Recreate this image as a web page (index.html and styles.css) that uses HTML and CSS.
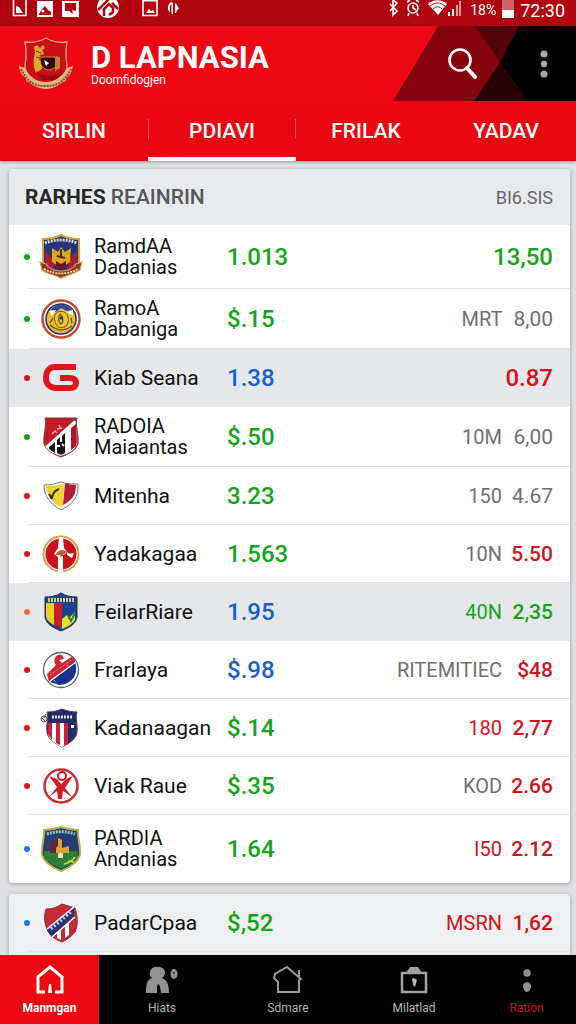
FILE: index.html
```html
<!DOCTYPE html>
<html lang="id">
<head>
    <meta charset="UTF-8">
    <meta name="viewport" content="width=device-width, initial-scale=1.0">
    <title>D LAPNASIA</title>
    <link rel="stylesheet" href="styles.css">
</head>
<body>
    <div class="status-bar">
        <svg class="status-left" width="190" height="20" viewBox="0 0 190 20" aria-hidden="true">
            <g fill="none" stroke="#fff" stroke-width="1.6">
                <path d="M13.500 0v15.500h12.500V0M143 .8h14v14.700h-14z"/>
            </g>
            <path fill="#fff" d="M16 13V6l3 1 4 6zM37 1h16v16H37zM62 1h17v16H62zM146 13l3-4 2 2 2-1 2 3zM169 4c1-2 3-2 4-1v11h-1.500V4.500l-1.500 1V12c-2-1-3-5-1-8zM175 3l2 2 2 4-2 1-1 3h-1z"/>
            <path fill="#b0050e" d="M39 14l3-5 3-3 3 4 3 2v3H39zM65 3h11v8l-4-1 1 4-4-3h-4z"/>
            <circle cx="43" cy="11" r="1.500" fill="#fff"/>
            <circle cx="108" cy="7" r="11" fill="#fff"/>
            <path fill="none" stroke="#b0050e" stroke-width="2.500" d="M98 10l12-12M104 16V9l5-5 4 4v4l-4 3M112 3l6 6"/>
        </svg>
        <div class="status-right">
            <svg width="76" height="20" viewBox="0 0 76 20" aria-hidden="true">
                <path fill="none" stroke="#fff" stroke-width="1.600" d="M2 4l7 7-4 4V0l4 3-7 8"/>
                <g fill="none" stroke="#fff" stroke-width="1.600">
                    <circle cx="25" cy="8" r="5"/>
                    <path d="M25 5v3l3 2M19 2l3-2M31 2l-3-2M21 13l-1 3M29 13l1 3"/>
                </g>
                <path fill="#fff" d="M40 4c5-5 14-5 19 0l-9 11z"/>
                <path fill="none" stroke="#b0050e" d="M42 6c5-4 10-4 15 0M45 9c3-3 6-3 9 0"/>
                <path fill="#fff" d="M60 16v-4h2v4zM64 16V9h2v7z"/>
                <path fill="#e59a9e" d="M68 16V5h2v11zM71 16V1h2v15z"/>
            </svg>
            <span class="battery-text">18%</span>
            <svg width="12" height="18" viewBox="0 0 12 18" aria-hidden="true">
                <path fill="#cf6268" d="M0 0h12v10H0z"/>
                <path fill="#fff" d="M0 10h12v8H0z"/>
            </svg>
            <span class="clock">72:30</span>
        </div>
    </div>

    <header class="app-bar">
        <svg class="app-bar-art" viewBox="0 0 200 74" preserveAspectRatio="none" aria-hidden="true">
            <path fill="#86040d" d="M62 0h138v74H17z"/>
            <path fill="#520208" d="M99 0h44l-19 36z"/>
            <path fill="#000" d="M143 0h57v74h-49l-27-38z"/>
            <path fill="#270103" d="M124 36l27 38H98z"/>
        </svg>
        <svg class="logo" width="56" height="54" viewBox="0 0 56 54" aria-hidden="true">
            <path d="M7 5c6 1 12 1 21-4 9 5 15 5 21 4-2 9-1 17 0 24 0 9-9 15-21 20C16 44 7 38 7 29c1-7 2-15 0-24z" fill="#cb0d14" stroke="#e3a68c" stroke-width="1.300"/>
            <path d="M16 10l3-2 3 3 3-3 2 3-3 2 2 4-4 1-1 5 3 1v8l-6 4c-3-7-3-14-1-20z" fill="#dda52a"/>
            <path d="M18 14l5 2M18 20l4 1" stroke="#7d2a0c" stroke-width="1"/>
            <path d="M22 20h18c0 8-3 12-9 13-6 0-9-5-9-13z" fill="#310406" stroke="#c78c3a" stroke-width="1"/>
            <path d="M26 23l5 3-3 3z" fill="#fff"/>
            <path d="M37 20h5v11l-5 3z" fill="#b7872c"/>
            <path d="M18 34c8 6 17 6 26 0l-6 9H24z" fill="#980a10"/>
            <path d="M1 29l6 2c5 11 14 14 21 14s16-4 21-14l6-2c-2 9-4 10-7 12 0 3-1 4-3 4-5 4-11 7-17 7s-13-3-17-7c-2 0-3-1-3-4-3-2-6-4-7-12z" fill="#ddb584"/>
            <path d="M3 32c7 15 15 17 25 17s18-3 25-17" fill="none" stroke="#85542b" stroke-width="2" stroke-dasharray="2 1"/>
        </svg>
        <div class="brand">
            <h1>D LAPNASIA</h1>
            <p>Doomfidogjen</p>
        </div>
        <button class="icon-button search" type="button" aria-label="Search">
            <svg width="32" height="34" viewBox="0 0 32 34" aria-hidden="true">
                <circle cx="13" cy="13" r="10.500" fill="none" stroke="#fff" stroke-width="2.600"/>
                <path d="M20 21l8 9" stroke="#fff" stroke-width="4" stroke-linecap="round"/>
            </svg>
        </button>
        <button class="icon-button more" type="button" aria-label="More">
            <svg width="10" height="30" viewBox="0 0 10 30" aria-hidden="true" fill="#a9a9a9">
                <circle cx="5" cy="5" r="3.500"/>
                <circle cx="5" cy="15" r="3.200"/>
                <circle cx="5" cy="25" r="3.500"/>
            </svg>
        </button>
    </header>

    <nav class="tabs">
        <a href="#sirlin">SIRLIN</a>
        <a href="#pdiavi" class="active">PDIAVI</a>
        <a href="#frilak">FRILAK</a>
        <a href="#yadav">YADAV</a>
    </nav>

    <main>
        <section class="card">
            <div class="card-header">
                <h2>RARHES <span>REAINRIN</span></h2>
                <span class="card-note">BI6.SIS</span>
            </div>
            <table class="ranking">
                <tr class="first">
                    <td class="state"><i class="dot green"></i></td>
                    <td class="badge">
                        <svg width="44" height="46" viewBox="0 0 44 46" aria-hidden="true">
                            <path d="M4 5c7 0 12-1 18-4 6 3 11 4 18 4v23c-2 7-9 11-18 16C13 39 6 35 4 28z" fill="#27337c" stroke="#d7a43b" stroke-width="2"/>
                            <path d="M6 17l8 8 2 12c-6-3-9-7-10-10zM38 17l-8 8-2 12c6-3 9-7 10-10z" fill="#a92229"/>
                            <path d="M6 9c10-4 22-4 32 0" fill="none" stroke="#dcd6c5" stroke-width="3" stroke-dasharray="2 1"/>
                            <path d="M13 14l6 4 3-5 4 5 6-4-1 14-9 6-9-6z" fill="#d9a91e"/>
                            <path d="M22 15v9M18 22l8 2" stroke="#443012" stroke-width="2"/>
                            <path d="M17 27l5 3 5-3v5l-5 4-5-4z" fill="#791219"/>
                            <path d="M1 28l6 2c4 6 9 7 15 7s12-2 15-7l6-2-2 8c-6 4-12 5-19 8-6-3-14-4-19-8z" fill="#8f3428" stroke="#dba84d" stroke-width="1.200"/>
                            <path d="M5 35c12 6 23 6 34 0" fill="none" stroke="#f0d895" stroke-width="2" stroke-dasharray="2 1"/>
                        </svg>
                    </td>
                    <td class="team two-line">RamdAA<br>Dadanias</td>
                    <td class="score green">1.013</td>
                    <td class="change"><b class="green large">13,50</b></td>
                </tr>
                <tr>
                    <td class="state"><i class="dot green"></i></td>
                    <td class="badge">
                        <svg width="40" height="42" viewBox="0 0 40 42" aria-hidden="true">
                            <circle cx="20" cy="21" r="18.500" fill="#fff" stroke="#c34c35" stroke-width="2.500"/>
                            <circle cx="20" cy="21" r="15" fill="#e6bd31" stroke="#2a3260" stroke-width="1.500"/>
                            <path d="M9 12c7-7 15-7 22 0l-5 1-6-3-5 4z" fill="#294aa3"/>
                            <path d="M8 13l7-1-4 6zM32 12l-6 2 6 4z" fill="#fff"/>
                            <path d="M15 15c7-5 14 2 12 9-1 6-10 8-12 2-2-4-2-8 0-11z" fill="#edc638" stroke="#755719"/>
                            <path d="M19 16c3 2 4 8 1 10-3-2-3-7-1-10zM9 27c7 6 14 7 22 1M12 20l-3 5M30 20l1 5" fill="none" stroke="#6d4b17" stroke-width="1.300"/>
                            <circle cx="20" cy="20" r="1.600" fill="#172b67"/>
                        </svg>
                    </td>
                    <td class="team two-line">RamoA<br>Dabaniga</td>
                    <td class="score green">$.15</td>
                    <td class="change">MRT <b class="plain">8,00</b></td>
                </tr>
                <tr class="marked">
                    <td class="state"><i class="dot red"></i></td>
                    <td class="badge">
                        <svg width="38" height="30" viewBox="0 0 38 30" aria-hidden="true">
                            <path d="M34 4H13C7 4 4 9 4 15s4 10 10 10h14c4 0 6-2 6-5s-2-5-6-5H18" fill="none" stroke="#dc1720" stroke-width="6"/>
                        </svg>
                    </td>
                    <td class="team">Kiab Seana</td>
                    <td class="score blue">1.38</td>
                    <td class="change"><b class="red large">0.87</b></td>
                </tr>
                <tr>
                    <td class="state"><i class="dot green"></i></td>
                    <td class="badge">
                        <svg width="38" height="42" viewBox="0 0 38 42" aria-hidden="true">
                            <path d="M3 2h32c-2 8 2 16 1 26-2 6-9 10-17 13C11 38 4 34 2 28 1 18 5 10 3 2z" fill="#c51925" stroke="#703c40"/>
                            <path d="M34 5L4 31c3 5 9 7 15 9 8-3 14-6 16-12 1-9-2-16-1-23z" fill="#fff"/>
                            <path d="M33 5L4 31" stroke="#fff" stroke-width="2"/>
                            <path d="M7 31l6-5v11l-6-4zM15 24l3-3v5h2v-6l3-3v20l-4 2-4-2z" fill="#161616"/>
                            <path d="M29 12l5-4c0 7 2 17 0 22l-5 4z" fill="#b21620"/>
                            <path d="M15 30h3M20 28l2 2" stroke="#fff" stroke-width="2"/>
                            <path d="M10 18l3-3 2 2M17 9l2 4M15 13l5-1" stroke="#f3abb0" stroke-width="1.500" fill="none"/>
                        </svg>
                    </td>
                    <td class="team two-line">RADOIA<br>Maiaantas</td>
                    <td class="score green">$.50</td>
                    <td class="change">10M <b class="plain">6,00</b></td>
                </tr>
                <tr>
                    <td class="state"><i class="dot red"></i></td>
                    <td class="badge">
                        <svg width="38" height="30" viewBox="0 0 38 30" aria-hidden="true">
                            <path d="M2 4c6 0 11-1 17-3 6 2 11 2 17 2 1 13-5 20-17 26C8 23 2 15 2 4z" fill="#fff" stroke="#777" stroke-width="1"/>
                            <path d="M4 5c6 0 12-1 18-2l-1 22-3 1C10 21 5 14 4 5z" fill="#efd32c"/>
                            <path d="M23 2c4 1 7 2 11 2 0 9-3 15-13 20z" fill="#b31e36"/>
                            <path d="M7 13l3 5M10 18c0-5 2-8 7-10" fill="none" stroke="#342c15" stroke-width="2"/>
                        </svg>
                    </td>
                    <td class="team">Mitenha</td>
                    <td class="score green">3.23</td>
                    <td class="change">150 <b class="plain">4.67</b></td>
                </tr>
                <tr>
                    <td class="state"><i class="dot red"></i></td>
                    <td class="badge">
                        <svg width="38" height="40" viewBox="0 0 38 40" aria-hidden="true">
                            <circle cx="19" cy="20" r="17.500" fill="#fff" stroke="#d7a04a" stroke-width="2"/>
                            <circle cx="19" cy="20" r="15.500" fill="#c8131c"/>
                            <path d="M17 3h4l1 11 3 4-4 4v16h-5V23l-4-3 4-6z" fill="#fff"/>
                            <path d="M13 21c4-6 8-6 12-3l-4 3z" fill="#c85843"/>
                            <path d="M25 18c3 3 5 1 7 1l-2 5-5-3z" fill="#fff"/>
                            <path d="M18 22l7-1" stroke="#922018" stroke-width="1"/>
                        </svg>
                    </td>
                    <td class="team">Yadakagaa</td>
                    <td class="score green">1.563</td>
                    <td class="change">10N <b class="red">5.50</b></td>
                </tr>
                <tr class="marked">
                    <td class="state"><i class="dot orange"></i></td>
                    <td class="badge">
                        <svg width="38" height="40" viewBox="0 0 38 40" aria-hidden="true">
                            <path d="M3 5c6 0 11-1 16-4 5 3 10 4 16 4v20c-1 7-7 10-16 14C10 35 4 32 3 25z" fill="#1c438f" stroke="#26334a"/>
                            <path d="M4 11h8v22c-5-3-8-5-8-10z" fill="#f0ce29"/>
                            <path d="M12 11h8v25l-8-3z" fill="#c71e2a"/>
                            <path d="M20 27l5-4 2 3 6-6v8c-3 4-6 6-13 9z" fill="#e8e42a"/>
                            <path d="M26 24l3 5 4-8" stroke="#258047" stroke-width="2" fill="none"/>
                            <path d="M6 8h26" stroke="#dfc574" stroke-width="4" stroke-dasharray="2 1"/>
                        </svg>
                    </td>
                    <td class="team">FeilarRiare</td>
                    <td class="score blue">1.95</td>
                    <td class="change green">40N <b class="green">2,35</b></td>
                </tr>
                <tr>
                    <td class="state"><i class="dot red"></i></td>
                    <td class="badge">
                        <svg width="38" height="40" viewBox="0 0 38 40" aria-hidden="true">
                            <circle cx="19" cy="20" r="17.500" fill="#fff" stroke="#58617e" stroke-width="1.300"/>
                            <path d="M32 9c6 14-1 25-15 26L8 32z" fill="#1a318d"/>
                            <path d="M5 24l9-9c-4-5 0-12 6-10l2 4-5 1 3 3L31 6l2 5L7 32z" fill="#cf2632"/>
                            <path d="M7 32l27-20" stroke="#fff" stroke-width="1.300"/>
                            <path d="M12 30l3 5M25 15l3 3M8 25l21-15" stroke="#e3a9b4" stroke-dasharray="2 2"/>
                        </svg>
                    </td>
                    <td class="team">Frarlaya</td>
                    <td class="score blue">$.98</td>
                    <td class="change">RITEMITIEC <b class="red">$48</b></td>
                </tr>
                <tr>
                    <td class="state"><i class="dot red"></i></td>
                    <td class="badge">
                        <svg width="42" height="40" viewBox="0 0 42 40" aria-hidden="true">
                            <path d="M7 4c6 0 10-1 15-3 5 2 10 3 15 3-2 6 1 12 0 20-1 7-7 11-15 15C14 35 8 31 7 24 6 16 9 10 7 4z" fill="#212c65" stroke="#703349"/>
                            <path d="M8 15h20v21l-6 3C14 35 8 31 8 24z" fill="#fff"/>
                            <path d="M8 15h4v17l-4-6zM16 15h4v22l-4-2zM24 15h4v21l-4 2z" fill="#c92037"/>
                            <path d="M12 9h21" stroke="#e0ddea" stroke-width="3" stroke-dasharray="2 1"/>
                            <path d="M31 17h3v3h-3z" fill="#fff"/>
                            <circle cx="4" cy="11" r="3" fill="#ddd" stroke="#555"/>
                            <path d="M2 10l3 3M6 6l-2 4" stroke="#444"/>
                        </svg>
                    </td>
                    <td class="team">Kadanaagan</td>
                    <td class="score green">$.14</td>
                    <td class="change red">180 <b class="red">2,77</b></td>
                </tr>
                <tr>
                    <td class="state"><i class="dot red"></i></td>
                    <td class="badge">
                        <svg width="38" height="40" viewBox="0 0 38 40" aria-hidden="true">
                            <circle cx="19" cy="20" r="16.500" fill="#fff" stroke="#cc2d33" stroke-width="2.500"/>
                            <path d="M7 10l8 3 4 5 5-5 7-3-8 12 7 9-9-6-1 8h-4l-1-8-8 6 8-10z" fill="#cf2028"/>
                            <circle cx="20" cy="10" r="4" fill="#fff" stroke="#bd1720" stroke-width="2"/>
                        </svg>
                    </td>
                    <td class="team">Viak Raue</td>
                    <td class="score green">$.35</td>
                    <td class="change">KOD <b class="red">2.66</b></td>
                </tr>
                <tr class="last">
                    <td class="state"><i class="dot azure"></i></td>
                    <td class="badge">
                        <svg width="42" height="46" viewBox="0 0 42 46" aria-hidden="true">
                            <path d="M4 4c6 0 11-1 17-3 6 2 11 3 17 3-1 8 3 14 2 25-2 7-9 12-19 16C11 41 4 36 2 29 1 18 5 12 4 4z" fill="#223e75" stroke="#bfae46" stroke-width="2"/>
                            <path d="M4 25h34v6c-4 5-9 9-17 11C13 40 8 36 4 31z" fill="#2d8034"/>
                            <path d="M7 8c9-3 19-3 28 0" fill="none" stroke="#96c4bf" stroke-width="3" stroke-dasharray="2 1"/>
                            <path d="M10 15h8v12h-8z" fill="#66213a"/>
                            <path d="M18 12l4 2v8l7-2v7H16v-5l2-2z" fill="#dda43a"/>
                            <path d="M18 27h5v5h-5z" fill="#f0e2be"/>
                            <path d="M24 38c4-1 8-3 11-7M28 35l6 1" fill="none" stroke="#c9d944" stroke-width="1.500"/>
                        </svg>
                    </td>
                    <td class="team two-line">PARDIA<br>Andanias</td>
                    <td class="score green">1.64</td>
                    <td class="change red">I50 <b class="red">2.12</b></td>
                </tr>
            </table>
        </section>

        <section class="card card-more">
            <table class="ranking">
                <tr>
                    <td class="state"><i class="dot azure"></i></td>
                    <td class="badge">
                        <svg width="38" height="40" viewBox="0 0 38 40" aria-hidden="true">
                            <path d="M4 6c7 0 11-2 16-5l13 4c3 10 3 17 0 24-3 4-7 7-13 10C12 36 7 32 5 26 2 19 2 12 4 6z" fill="#c72937" stroke="#813044"/>
                            <path d="M32 5v8L10 34l-5-7z" fill="#27346f"/>
                            <path d="M5 26L32 4M10 34l23-20" stroke="#fff" stroke-width="1.500"/>
                            <path d="M9 26l20-17" stroke="#c8cce2" stroke-width="3" stroke-dasharray="2 2"/>
                            <path d="M15 30l4-3v10l-4-2zM23 23l4-3v12l-4 3z" fill="#fff"/>
                        </svg>
                    </td>
                    <td class="team">PadarCpaa</td>
                    <td class="score green">$,52</td>
                    <td class="change red">MSRN <b class="red">1,62</b></td>
                </tr>
            </table>
        </section>
    </main>

    <nav class="bottom-nav">
        <a href="#home" class="current">
            <svg width="30" height="32" viewBox="0 0 30 32" aria-hidden="true">
                <path d="M10 28H3V13L15 3l12 10v15h-7" fill="none" stroke="#fff" stroke-width="3"/>
                <path d="M14 20h2l1 9h-4z" fill="#fff"/>
            </svg>
            <span>Manmgan</span>
        </a>
        <a href="#hiats">
            <svg width="34" height="32" viewBox="0 0 34 32" aria-hidden="true">
                <path d="M5 8c1-7 14-7 15 0 0 3-1 4-3 6 5 2 7 6 7 15h-8l-1-7-2-2-1 3v6H1c0-9 1-13 6-15-2-2-3-3-2-6z" fill="#929292"/>
                <ellipse cx="29" cy="10" rx="3.500" ry="5" fill="#929292"/>
                <circle cx="29" cy="9" r="1" fill="#222"/>
            </svg>
            <span>Hiats</span>
        </a>
        <a href="#sdmare">
            <svg width="32" height="32" viewBox="0 0 32 32" aria-hidden="true">
                <path d="M2 14l1-4L15 3l14 12-2 1v12H6V18zM27 13V6" fill="none" stroke="#999" stroke-width="2"/>
            </svg>
            <span>Sdmare</span>
        </a>
        <a href="#milatlad">
            <svg width="30" height="32" viewBox="0 0 30 32" aria-hidden="true">
                <path d="M3 9h24v19H3z" fill="none" stroke="#a2a29f" stroke-width="2.500"/>
                <path d="M7 9l4-6h8l4 6z" fill="#a2a29f"/>
                <path d="M13 15l2-1 3 2-2 7-2-2z" fill="#b5b5b2"/>
            </svg>
            <span>Milatlad</span>
        </a>
        <a href="#ration" class="alert">
            <svg width="12" height="32" viewBox="0 0 12 32" aria-hidden="true" fill="#929292">
                <circle cx="6" cy="9" r="3.700"/>
                <path d="M2 22c0-5 8-5 8 0 0 3-2 6-4 6s-4-3-4-6z"/>
            </svg>
            <span>Ration</span>
        </a>
    </nav>
</body>
</html>
```

FILE: styles.css
```css
* {
    box-sizing: border-box;
}
body {
    font-family: Roboto, sans-serif;
    margin: 0;
    min-height: 100vh;
    display: flex;
    flex-direction: column;
    background-color: #dfe0e4;
    color: #111;
}
h1,
h2,
p {
    margin: 0;
}
a {
    color: inherit;
    text-decoration: none;
}

/* status bar */
.status-bar {
    display: flex;
    justify-content: space-between;
    height: 26px;
    padding-right: 11px;
    background-color: #b0050e;
    color: #fff;
}
.status-right {
    display: flex;
    align-items: flex-start;
    gap: 6px;
    line-height: 21px;
}
.battery-text {
    font-size: 14px;
}
.clock {
    font-size: 18px;
}

/* app bar */
.app-bar {
    position: relative;
    display: flex;
    align-items: center;
    height: 75px;
    padding: 0 27px 0 18px;
    background-color: #ee0712;
    color: #fff;
}
.app-bar-art {
    position: absolute;
    top: 0;
    right: 0;
    width: 200px;
    height: 100%;
}
.logo {
    margin-right: 17px;
}
.brand {
    flex: 1;
}
.brand h1 {
    font-size: 31px;
    line-height: 32px;
    font-weight: 700;
    white-space: nowrap;
}
.brand p {
    font-size: 12px;
    line-height: 12px;
}
.icon-button {
    position: relative;
    display: flex;
    padding: 0;
    border: none;
    background: none;
    cursor: pointer;
}
.search {
    margin-right: 60px;
}

/* tabs */
.tabs {
    display: grid;
    grid-template-columns: 37fr 37fr 35fr 35fr;
    height: 60px;
    background-color: #eb0711;
    color: #fff;
    box-shadow: 0 1px 3px rgba(0, 0, 0, 0.35);
}
.tabs a {
    display: flex;
    align-items: center;
    justify-content: center;
    border-bottom: 4px solid transparent;
    padding-top: 4px;
    font-size: 21px;
    font-weight: 500;
}
.tabs .active {
    border-bottom-color: #fff;
    background: linear-gradient(#f4545b, #f4545b) left center / 1px 20px no-repeat,
        linear-gradient(#f4545b, #f4545b) right center / 1px 20px no-repeat;
}

/* cards */
main {
    flex: 1;
    display: flex;
    flex-direction: column;
    gap: 11px;
    padding: 8px 6px 0 9px;
}
.card {
    background-color: #fff;
    border-radius: 4px;
    box-shadow: 0 1px 4px rgba(0, 0, 0, 0.3);
    overflow: hidden;
}
.card-header {
    display: flex;
    align-items: center;
    justify-content: space-between;
    height: 56px;
    padding: 0 17px 0 16px;
    background-color: #e9eaec;
}
.card-header h2 {
    font-size: 21px;
    font-weight: 700;
    color: #26292c;
}
.card-header h2 span {
    font-weight: 500;
    color: #55585b;
}
.card-note {
    font-size: 18px;
    color: #66696c;
}
.card-more {
    flex: 1;
    border-radius: 4px 4px 0 0;
    background-color: #eeeff1;
}

/* ranking table */
.ranking {
    width: 100%;
    border-collapse: collapse;
    table-layout: fixed;
}
.ranking tr {
    background: linear-gradient(#e0e2e4, #e0e2e4) 19px bottom / 100% 1px no-repeat;
}
.ranking .marked {
    background: #e6e7ea;
}
.ranking .last {
    background: none;
}
.ranking td {
    height: 58px;
    padding: 0;
    vertical-align: middle;
}
.ranking .two-line {
    height: 60px;
    line-height: 21px;
}
.ranking .first td {
    height: 64px;
}
.ranking .last td {
    height: 68px;
}
.ranking .state {
    width: 30px;
    padding-left: 15px;
}
.dot {
    display: block;
    width: 6px;
    height: 6px;
    border-radius: 50%;
    background-color: currentColor;
}
.ranking .badge {
    width: 44px;
}
.badge svg {
    display: block;
    margin: 0 auto;
}
.ranking .team {
    width: 144px;
    padding-left: 11px;
    font-size: 21px;
    white-space: nowrap;
}
.ranking .two-line {
    font-size: 20px;
}
.ranking .score {
    width: 80px;
    font-size: 24px;
    font-weight: 500;
}
.ranking .change {
    padding-right: 17px;
    font-size: 20px;
    text-align: right;
    color: #707070;
    white-space: nowrap;
}
.change b {
    display: inline-block;
    min-width: 42px;
    margin-left: 4px;
    font-size: 21px;
    font-weight: 500;
}
.change .large {
    font-size: 24px;
}
.change .plain {
    font-weight: 400;
}
.ranking .green {
    color: #16a31c;
}
.ranking .blue {
    color: #1a5fc8;
}
.ranking .red {
    color: #d2131c;
}
.ranking .orange {
    color: #fa6c3c;
}
.ranking .azure {
    color: #1f78e0;
}

/* bottom navigation */
.bottom-nav {
    position: sticky;
    bottom: 0;
    display: grid;
    grid-template-columns: 11fr 14fr 14fr 14fr 11fr;
    height: 69px;
    background-color: #000;
    color: #b4b4b4;
}
.bottom-nav a {
    display: flex;
    flex-direction: column;
    align-items: center;
    justify-content: center;
    gap: 4px;
    font-size: 12px;
    line-height: 16px;
}
.bottom-nav .current {
    background-color: #ee0712;
    color: #fff;
    font-weight: 700;
}
.bottom-nav .alert {
    color: #c8141c;
}
```
